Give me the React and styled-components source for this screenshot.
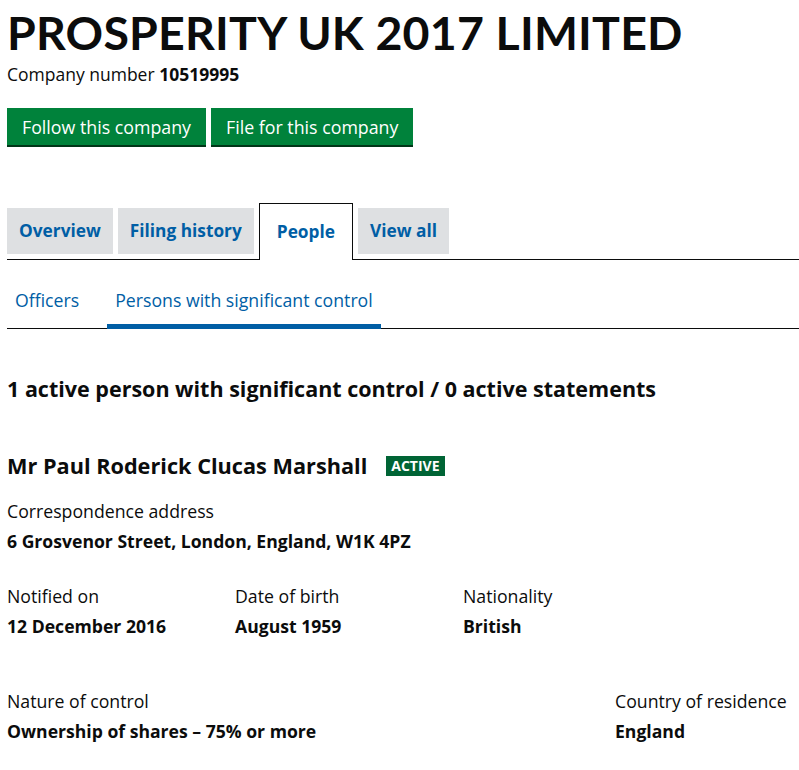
import React from "react";
import styled, { createGlobalStyle } from "styled-components";

const GlobalStyle = createGlobalStyle`
  body {
    margin: 0;
    background: #ffffff;
    font-family: "Open Sans", "Liberation Sans", sans-serif;
    color: #0b0c0c;
  }
`;

const Page = styled.main`
  padding: 0 0 0 7px;
`;

const Title = styled.h1`
  margin: 0;
  padding-top: 5px;
  font-family: Lato, "Liberation Sans", sans-serif;
  font-size: 46.5px;
  line-height: 54px;
  font-weight: 700;
  letter-spacing: 0.2px;
`;

const CompanyNumber = styled.p`
  margin: 3px 0 0;
  font-size: 17.5px;
  line-height: 24px;
  strong {
    font-weight: 700;
  }
`;

const Actions = styled.div`
  display: flex;
  gap: 5px;
  margin-top: 22px;
`;

const GreenButton = styled.button`
  font-family: inherit;
  font-size: 17.8px;
  line-height: 24px;
  color: #ffffff;
  background: #00823b;
  border: 0;
  border-bottom: 2px solid #003618;
  padding: 7px 15px 6px;
  cursor: pointer;
`;

const Tabs = styled.ul`
  list-style: none;
  display: flex;
  align-items: flex-end;
  gap: 5px;
  margin: 56px 0 0;
  padding: 0;
  border-bottom: 1px solid #0b0c0c;
`;

const Tab = styled.li`
  font-size: 17.3px;
  font-weight: 700;
  line-height: 24px;
  color: #005ea5;
  background: ${(p) => (p.$active ? "#ffffff" : "#dee0e2")};
  padding: ${(p) => (p.$active ? "16px 17px 16px" : "11px 12px 11px")};
  border: ${(p) => (p.$active ? "1px solid #0b0c0c" : "0")};
  border-bottom: 0;
  margin-bottom: ${(p) => (p.$active ? "-1px" : "5px")};
`;

const SubTabs = styled.ul`
  list-style: none;
  display: flex;
  margin: 0;
  padding: 0;
  border-bottom: 1px solid #0b0c0c;
`;

const SubTab = styled.li`
  font-size: 17.7px;
  line-height: 24px;
  color: #005ea5;
  padding: 28px 8px 12px;
  margin-right: 20px;
  border-bottom: 5px solid ${(p) => (p.$active ? "#005ea5" : "transparent")};
  margin-bottom: -1px;
`;

const Summary = styled.h2`
  margin: 46px 0 0;
  font-size: 21.5px;
  line-height: 28px;
  font-weight: 700;
`;

const PersonName = styled.h3`
  display: flex;
  align-items: center;
  gap: 19px;
  margin: 49px 0 0;
  font-size: 21.7px;
  line-height: 28px;
  font-weight: 700;
`;

const Badge = styled.span`
  display: inline-block;
  background: #006435;
  color: #ffffff;
  font-size: 14px;
  line-height: 20px;
  font-weight: 700;
  padding: 0 5px;
`;

const Field = styled.dl`
  margin: 0;
`;

const Label = styled.dt`
  font-size: 17.7px;
  line-height: 24px;
`;

const Value = styled.dd`
  margin: 6px 0 0;
  font-size: 17.6px;
  line-height: 24px;
  font-weight: 700;
`;

const Address = styled(Field)`
  margin-top: 19px;
`;

const Row = styled.div`
  display: grid;
  grid-template-columns: ${(p) => p.$cols};
  margin-top: ${(p) => p.$gap};
`;

export default function App() {
  return (
    <Page>
      <GlobalStyle />
      <Title>PROSPERITY UK 2017 LIMITED</Title>
      <CompanyNumber>
        Company number <strong>10519995</strong>
      </CompanyNumber>
      <Actions>
        <GreenButton>Follow this company</GreenButton>
        <GreenButton>File for this company</GreenButton>
      </Actions>

      <Tabs>
        <Tab>Overview</Tab>
        <Tab>Filing history</Tab>
        <Tab $active>People</Tab>
        <Tab>View all</Tab>
      </Tabs>
      <SubTabs>
        <SubTab>Officers</SubTab>
        <SubTab $active>Persons with significant control</SubTab>
      </SubTabs>

      <Summary>1 active person with significant control / 0 active statements</Summary>

      <PersonName>
        Mr Paul Roderick Clucas Marshall <Badge>ACTIVE</Badge>
      </PersonName>

      <Address>
        <Label>Correspondence address</Label>
        <Value>6 Grosvenor Street, London, England, W1K 4PZ</Value>
      </Address>

      <Row $cols="228px 228px 228px" $gap="31px">
        <Field>
          <Label>Notified on</Label>
          <Value>12 December 2016</Value>
        </Field>
        <Field>
          <Label>Date of birth</Label>
          <Value>August 1959</Value>
        </Field>
        <Field>
          <Label>Nationality</Label>
          <Value>British</Value>
        </Field>
      </Row>

      <Row $cols="608px 1fr" $gap="51px">
        <Field>
          <Label>Nature of control</Label>
          <Value>Ownership of shares – 75% or more</Value>
        </Field>
        <Field>
          <Label>Country of residence</Label>
          <Value>England</Value>
        </Field>
      </Row>
    </Page>
  );
}
